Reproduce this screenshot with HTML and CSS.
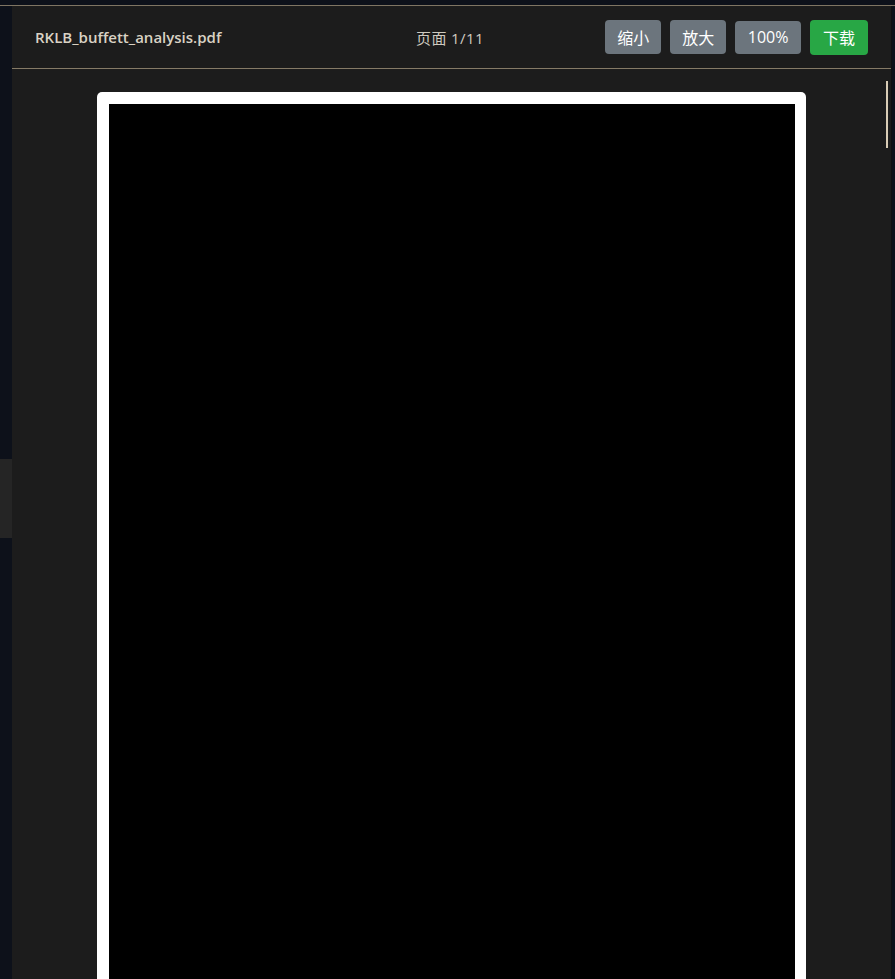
FILE: index.html
```html
<!DOCTYPE html>
<html lang="zh-CN">
<head>
    <meta charset="UTF-8">
    <meta name="viewport" content="width=device-width, initial-scale=1.0">
    <title>RKLB_buffett_analysis.pdf</title>
    <link rel="stylesheet" href="styles.css">
</head>
<body>
    <div class="topbar"></div>
    <div class="layout">
        <div class="rail">
            <div class="rail-handle"></div>
        </div>
        <div class="viewer">
            <div class="viewer-header">
                <span class="file-name">RKLB_buffett_analysis.pdf</span>
                <span class="page-info">页面 1/11</span>
                <div class="actions">
                    <button class="btn">缩小</button>
                    <button class="btn">放大</button>
                    <button class="btn btn-zoom">100%</button>
                    <button class="btn btn-download">下载</button>
                </div>
            </div>
            <div class="viewer-body">
                <div class="pdf-page">
                    <div class="pdf-canvas"></div>
                </div>
                <div class="scroll-thumb"></div>
            </div>
        </div>
    </div>
</body>
</html>
```

FILE: styles.css
```css
html, body {
    height: 100%;
}
body {
    margin: 0;
    background-color: #0d111a;
    font-family: "Open Sans", "Noto Sans CJK SC", sans-serif;
    overflow: hidden;
}
.topbar {
    height: 5px;
    border-bottom: 1px solid #7f7563;
}
.layout {
    display: flex;
    height: calc(100% - 6px);
}
.rail {
    width: 12px;
    flex-shrink: 0;
    padding-top: 453px;
}
.rail-handle {
    height: 79px;
    background-color: #252525;
}
.viewer {
    width: 879px;
    background-color: #1c1c1c;
    border-right: 1px solid #111;
    display: flex;
    flex-direction: column;
}
.viewer-header {
    height: 62px;
    border-bottom: 1px solid #857a66;
    display: flex;
    align-items: center;
    padding: 0 23px;
    position: relative;
}
.file-name {
    color: #d9d2c4;
    font-size: 15px;
    font-weight: 600;
}
.page-info {
    position: absolute;
    left: 404px;
    color: #cfcac0;
    font-size: 15px;
    letter-spacing: 0.4px;
}
.actions {
    margin-left: auto;
    display: flex;
    gap: 9px;
    align-items: center;
}
.btn {
    height: 34px;
    padding: 0 12px;
    border: none;
    border-radius: 4px;
    background-color: #6c757d;
    color: #fff;
    font-family: "Open Sans", "Noto Sans CJK SC", sans-serif;
    font-size: 16px;
}
.btn-zoom {
    height: 33px;
    padding: 0 12.5px;
}
.btn-download {
    height: 35px;
    padding: 0 13px;
    background-color: #28a745;
}
.viewer-body {
    flex: 1;
    position: relative;
    overflow: hidden;
    padding-top: 23px;
}
.pdf-page {
    width: 686px;
    height: 1000px;
    margin: 0 auto;
    padding: 12px 11px 12px 12px;
    background-color: #fff;
    border-radius: 5px;
}
.pdf-canvas {
    height: 100%;
    background-color: #000;
}
.scroll-thumb {
    position: absolute;
    top: 12px;
    right: 3px;
    width: 2px;
    height: 67px;
    background-color: #d8ccb6;
}
```
